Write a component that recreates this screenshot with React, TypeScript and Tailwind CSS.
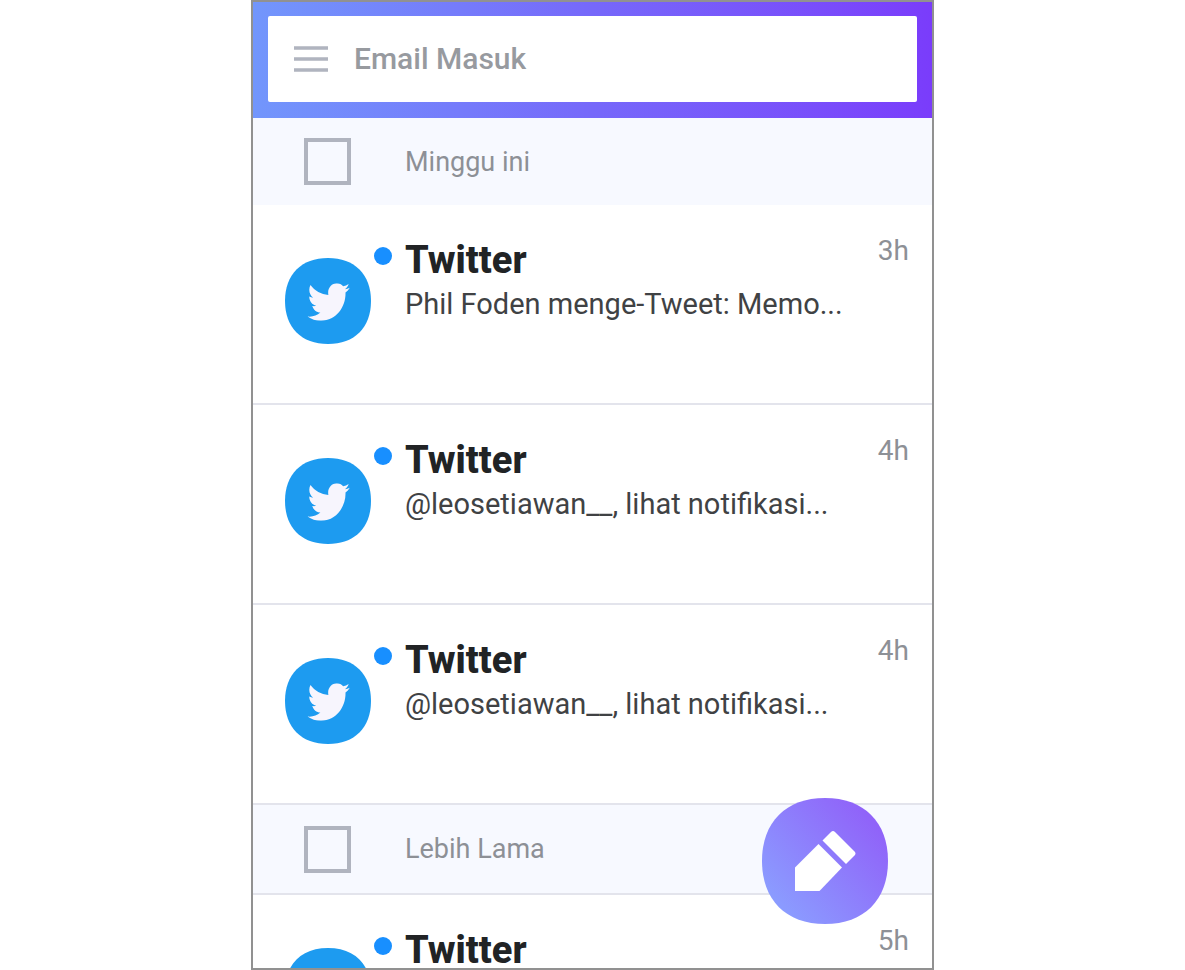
import { useId } from "react";

type Mail = {
  sender: string;
  preview?: string;
  time: string;
};

const thisWeek: Mail[] = [
  { sender: "Twitter", preview: "Phil Foden menge-Tweet: Memo...", time: "3h" },
  { sender: "Twitter", preview: "@leosetiawan__, lihat notifikasi...", time: "4h" },
  { sender: "Twitter", preview: "@leosetiawan__, lihat notifikasi...", time: "4h" },
];

const older: Mail[] = [{ sender: "Twitter", time: "5h" }];

const SQUIRCLE =
  "M63 0 C102 0 126 24 126 63 C126 102 102 126 63 126 C24 126 0 102 0 63 C0 24 24 0 63 0 Z";

function TwitterAvatar() {
  return (
    <svg className="mt-[53px] size-[86px] shrink-0" viewBox="0 0 126 126" aria-hidden="true">
      <path d={SQUIRCLE} fill="#1d9bf0" />
      <svg x="33" y="37" width="62" height="55" viewBox="0 48 512 416" preserveAspectRatio="none">
        <path
          fill="#f7f5fd"
          d="M459.37 151.716c.325 4.548.325 9.097.325 13.645 0 138.72-105.583 298.558-298.558 298.558-59.452 0-114.68-17.219-161.137-47.106 8.447.974 16.568 1.299 25.34 1.299 49.055 0 94.213-16.568 130.274-44.832-46.132-.975-84.792-31.188-98.112-72.772 6.498.974 12.995 1.624 19.818 1.624 9.421 0 18.843-1.3 27.614-3.573-48.081-9.747-84.143-51.98-84.143-102.985v-1.299c13.969 7.797 30.214 12.67 47.431 13.319-28.264-18.843-46.781-51.005-46.781-87.391 0-19.492 5.197-37.36 14.294-52.954 51.655 63.675 129.3 105.258 216.365 109.807-1.624-7.797-2.599-15.918-2.599-24.04 0-57.828 46.782-104.934 104.934-104.934 30.213 0 57.502 12.67 76.67 33.137 23.715-4.548 46.456-13.32 66.599-25.34-7.798 24.366-24.366 44.833-46.132 57.827 21.117-2.273 41.584-8.122 60.426-16.243-14.292 20.791-32.161 39.308-52.628 54.253z"
        />
      </svg>
    </svg>
  );
}

function MailRow({ mail }: { mail: Mail }) {
  return (
    <li className="flex h-[200px] shrink-0 items-start border-b-2 border-[#e3e4ec] bg-white pr-[23px] pl-8">
      <TwitterAvatar />
      <span className="mt-[42px] ml-[3px] size-[18px] shrink-0 rounded-full bg-[#188fff]" />
      <div className="mt-[37px] ml-[13px] min-w-0 flex-1">
        <h3 className="text-[38px] leading-9 font-extrabold text-[#212325]">{mail.sender}</h3>
        {mail.preview && (
          <p className="mt-1.5 truncate text-[29px] leading-10 text-[#404244]">{mail.preview}</p>
        )}
      </div>
      <time className="mt-[30px] text-[28px] leading-8 text-[#8d9096]">{mail.time}</time>
    </li>
  );
}

function Section({ title, mails, divided }: { title: string; mails: Mail[]; divided?: boolean }) {
  const id = useId();

  return (
    <section>
      <div
        className={
          divided
            ? "flex h-[90px] items-center border-b-2 border-[#e3e4ec] bg-[#f7f9ff] pl-[51px]"
            : "flex h-[87px] items-center bg-[#f7f9ff] pl-[51px]"
        }
      >
        <input
          id={id}
          type="checkbox"
          className="size-[47px] shrink-0 appearance-none border-4 border-[#b0b4bf] checked:bg-[#b0b4bf]"
        />
        <label htmlFor={id} className="pl-[54px] text-[27px] leading-8 text-[#8d9096]">
          {title}
        </label>
      </div>
      <ul>
        {mails.map((mail, i) => (
          <MailRow key={i} mail={mail} />
        ))}
      </ul>
    </section>
  );
}

export default function App() {
  return (
    <div className="flex h-screen justify-center bg-white font-['Roboto',sans-serif]">
      <div className="relative flex w-full max-w-[683px] flex-col overflow-hidden border-2 border-[#919191] bg-white">
        <header className="shrink-0 bg-linear-to-r from-[#7296fc] via-[#7668fa] to-[#7a3cfb] px-[15px] pt-3.5 pb-4">
          <div className="flex h-[86px] items-center rounded-xs bg-white pl-[26px]">
            <button type="button" aria-label="Menu" className="shrink-0">
              <svg className="h-7 w-[34px]" viewBox="0 0 34 28" aria-hidden="true">
                <path d="M0 3H34M0 14H34M0 25H34" stroke="#b0b4bf" strokeWidth="3.5" />
              </svg>
            </button>
            <h1 className="pl-[26px] text-[30px] leading-9 font-medium text-[#979a9f]">
              Email Masuk
            </h1>
          </div>
        </header>

        <main className="min-h-0 flex-1 overflow-hidden">
          <Section title="Minggu ini" mails={thisWeek} />
          <Section title="Lebih Lama" mails={older} divided />
        </main>

        {/* Compose button */}
        <button type="button" aria-label="Tulis email" className="absolute right-11 bottom-11">
          <svg className="size-[126px]" viewBox="0 0 126 126" aria-hidden="true">
            <defs>
              <linearGradient id="compose" x1="0.1" y1="0.8" x2="0.85" y2="0.15">
                <stop offset="0" stopColor="#8b9bff" />
                <stop offset="1" stopColor="#9063f9" />
              </linearGradient>
            </defs>
            <path d={SQUIRCLE} fill="url(#compose)" />
            <path d="M33 69.5 L56.5 46 L80 69.5 L57.5 93 H33 Z" fill="#fff" />
            <path
              d="M60.5 42.5 L69 34 Q71 32 73 34 L92.5 53.5 Q94.5 55.5 92.5 57.5 L84 66 Z"
              fill="#fff"
            />
          </svg>
        </button>
      </div>
    </div>
  );
}
